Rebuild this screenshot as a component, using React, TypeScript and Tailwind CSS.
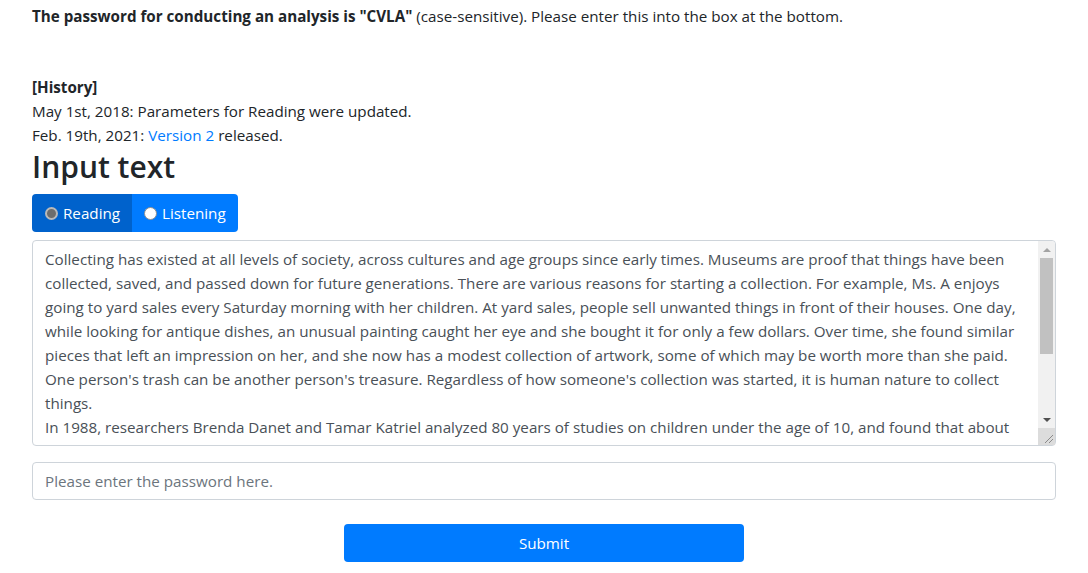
import { useState } from "react";

// Strona analizy tekstu — styl Bootstrapa 4 odwzorowany klasami Tailwinda

const PASSAGE = `Collecting has existed at all levels of society, across cultures and age groups since early times. Museums are proof that things have been collected, saved, and passed down for future generations. There are various reasons for starting a collection. For example, Ms. A enjoys going to yard sales every Saturday morning with her children. At yard sales, people sell unwanted things in front of their houses. One day, while looking for antique dishes, an unusual painting caught her eye and she bought it for only a few dollars. Over time, she found similar pieces that left an impression on her, and she now has a modest collection of artwork, some of which may be worth more than she paid. One person's trash can be another person's treasure. Regardless of how someone's collection was started, it is human nature to collect things.
In 1988, researchers Brenda Danet and Tamar Katriel analyzed 80 years of studies on children under the age of 10, and found that about 90% collected something. This shows us that people like to gather things from an early age. Even after becoming adults, people continue collecting stamps, coins, dolls, and many other objects.`;

function Radio({ checked }: { checked: boolean }) {
  return checked ? (
    <span className="inline-block w-[13px] h-[13px] rounded-full bg-[#6d6d6d] border-2 border-[#b9b9b9] mr-[5px]" />
  ) : (
    <span className="inline-block w-[13px] h-[13px] rounded-full bg-white border border-[#8f8f8f] mr-[5px]" />
  );
}

// Pasek przewijania rysowany ręcznie (headless nie pokazuje natywnego)
function FakeScrollbar() {
  return (
    <div className="absolute top-px right-px bottom-px w-[17px] flex flex-col bg-[#f1f1f1] rounded-tr pointer-events-none">
      <div className="h-[17px] flex items-center justify-center">
        <span className="w-0 h-0 border-l-[4px] border-r-[4px] border-b-[4px] border-l-transparent border-r-transparent border-b-[#a3a3a3]" />
      </div>
      <div className="h-[96px] mx-[2px] bg-[#c1c1c1]" />
      <div className="flex-1" />
      <div className="h-[17px] flex items-center justify-center">
        <span className="w-0 h-0 border-l-[4px] border-r-[4px] border-t-[4px] border-l-transparent border-r-transparent border-t-[#505050]" />
      </div>
      <div className="h-[17px] bg-[#dcdcdc] flex items-end justify-end p-[2px]">
        <svg width="10" height="10" viewBox="0 0 10 10">
          <line x1="2" y1="10" x2="10" y2="2" stroke="#8a8a8a" strokeWidth="1" />
          <line x1="6" y1="10" x2="10" y2="6" stroke="#8a8a8a" strokeWidth="1" />
        </svg>
      </div>
    </div>
  );
}

export default function App() {
  const [mode, setMode] = useState<"reading" | "listening">("reading");
  const [text, setText] = useState(PASSAGE);
  const [password, setPassword] = useState("");

  return (
    <div
      className="min-h-screen bg-white text-[#212529] text-[15.2px] leading-6 px-8 pt-1"
      style={{ fontFamily: '"Open Sans", "Noto Sans", sans-serif' }}
    >
      <p className="mb-[47px]">
        <span className="font-bold">The password for conducting an analysis is "CVLA"</span> (case-sensitive). Please enter
        this into the box at the bottom.
      </p>

      <div>
        <div className="font-bold">[History]</div>
        <div>May 1st, 2018: Parameters for Reading were updated.</div>
        <div>
          Feb. 19th, 2021: <a className="text-[#007bff]" href="#">Version 2</a> released.
        </div>
      </div>

      <h2 className="text-[30px] leading-[38px] font-semibold mt-px mb-2">Input text</h2>

      <div className="inline-flex rounded overflow-hidden">
        <button
          type="button"
          onClick={() => setMode("reading")}
          className={`flex items-center h-[38px] pl-[13px] pr-3 text-white ${mode === "reading" ? "bg-[#0062cc]" : "bg-[#007bff]"}`}
        >
          <Radio checked={mode === "reading"} />
          Reading
        </button>
        <button
          type="button"
          onClick={() => setMode("listening")}
          className={`flex items-center h-[38px] px-3 text-white ${mode === "listening" ? "bg-[#0062cc]" : "bg-[#007bff]"}`}
        >
          <Radio checked={mode === "listening"} />
          Listening
        </button>
      </div>

      <div className="relative mt-2">
        <textarea
          value={text}
          onChange={(e) => setText(e.target.value)}
          className="block w-full h-[206px] pl-3 pr-[29px] py-[6px] border border-[#ced4da] rounded text-[#495057] leading-6 overflow-y-scroll [scrollbar-width:none] resize-none outline-none"
        />
        <FakeScrollbar />
      </div>

      <input
        type="password"
        value={password}
        onChange={(e) => setPassword(e.target.value)}
        placeholder="Please enter the password here."
        className="block w-full h-[38px] mt-4 px-3 border border-[#ced4da] rounded text-[#495057] placeholder:text-[#6c757d] outline-none"
      />

      <div className="flex justify-center mt-6">
        <button type="button" className="w-[400px] h-[38px] rounded bg-[#007bff] text-white">
          Submit
        </button>
      </div>
    </div>
  );
}
